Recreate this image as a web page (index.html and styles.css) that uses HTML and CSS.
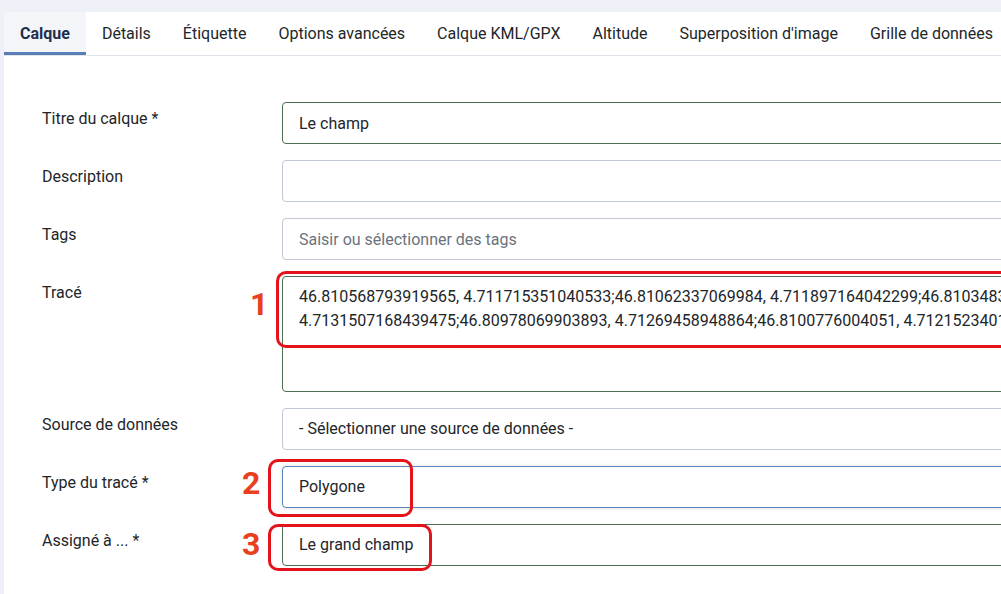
FILE: index.html
```html
<!DOCTYPE html>
<html lang="fr">

<head>
    <meta charset="UTF-8">
    <meta name="viewport" content="width=device-width, initial-scale=1.0">
    <title>Calque</title>
    <link rel="stylesheet" href="styles.css">
</head>

<body>
    <div class="page">
        <div class="card">
            <ul class="tabs">
                <li class="tab active">Calque</li>
                <li class="tab">Détails</li>
                <li class="tab">Étiquette</li>
                <li class="tab">Options avancées</li>
                <li class="tab">Calque KML/GPX</li>
                <li class="tab">Altitude</li>
                <li class="tab">Superposition d'image</li>
                <li class="tab">Grille de données</li>
            </ul>

            <form class="form" name="frm">
                <label class="lbl">Titre du calque *</label>
                <input class="field ok" type="text" value="Le champ">

                <label class="lbl">Description</label>
                <input class="field" type="text">

                <label class="lbl">Tags</label>
                <input class="field" type="text" placeholder="Saisir ou sélectionner des tags">

                <label class="lbl">Tracé</label>
                <textarea class="field ok area" wrap="off">46.810568793919565, 4.711715351040533;46.81062337069984, 4.711897164042299;46.81034836271338,
4.7131507168439475;46.80978069903893, 4.71269458948864;46.8100776004051, 4.712152340155874;46.81056879391956</textarea>

                <label class="lbl">Source de données</label>
                <select class="field">
                    <option>- Sélectionner une source de données -</option>
                </select>

                <label class="lbl">Type du tracé *</label>
                <select class="field focus">
                    <option>Polygone</option>
                </select>

                <label class="lbl">Assigné à ... *</label>
                <select class="field ok">
                    <option>Le grand champ</option>
                </select>

                <!-- annotations -->
                <div class="mark box1"></div>
                <div class="mark box2"></div>
                <div class="mark box3"></div>
                <span class="num num1">1</span>
                <span class="num num2">2</span>
                <span class="num num3">3</span>
            </form>
        </div>
    </div>
</body>

</html>
```

FILE: styles.css
```css
html,
body {
    margin: 0;
    height: 100%;
    overflow: hidden;
}

body {
    background-color: #edf0f6;
    font-family: Roboto, "Liberation Sans", sans-serif;
    font-size: 16px;
    color: #22262a;
}

.page {
    padding: 12px 0 0 4px;
    height: 100%;
    box-sizing: border-box;
}

.card {
    background-color: #fff;
    height: 100%;
    overflow: hidden;
}

.tabs {
    display: flex;
    margin: 0;
    padding: 0;
    list-style: none;
    border-bottom: 1px solid #dfe3ea;
}

.tab {
    padding: 3px 16px 0;
    height: 37px;
    line-height: 37px;
    border-bottom: 3px solid transparent;
    white-space: nowrap;
}

.tab.active {
    background-color: #f3f5f9;
    border-bottom-color: #5b7db6;
    color: #1d2f4f;
    font-weight: bold;
}

.form {
    position: relative;
    display: grid;
    grid-template-columns: 240px 900px;
    row-gap: 16px;
    padding: 46px 0 0 38px;
}

.lbl {
    padding-top: 5px;
    line-height: 24px;
}

.field {
    box-sizing: border-box;
    height: 42px;
    margin: 0;
    padding: 8px 16px;
    border: 1px solid #c0c8d4;
    border-radius: 4px;
    background-color: #fff;
    font-family: inherit;
    font-size: 16px;
    line-height: 24px;
    color: #22262a;
    appearance: none;
    outline: none;
}

.field::placeholder {
    color: #6b737c;
}

.field.ok {
    border-color: #4b6f52;
}

.field.focus {
    border-color: #5a86bb;
    box-shadow: 0 0 2px 2px rgba(0, 0, 0, 0.05);
}

.area {
    height: 116px;
    resize: none;
    overflow: hidden;
}

.mark {
    position: absolute;
    box-sizing: border-box;
    border: 3px solid #e3121b;
    border-radius: 10px;
}

.box1 {
    left: 272px;
    top: 215px;
    width: 760px;
    height: 77px;
}

.box2 {
    left: 264px;
    top: 403px;
    width: 145px;
    height: 58px;
}

.box3 {
    left: 264px;
    top: 468px;
    width: 164px;
    height: 47px;
}

.num {
    position: absolute;
    font-size: 32px;
    line-height: 32px;
    font-weight: bold;
    color: #e8401c;
}

.num1 {
    left: 246px;
    top: 232px;
}

.num2 {
    left: 238px;
    top: 411px;
}

.num3 {
    left: 238px;
    top: 472px;
}
```
